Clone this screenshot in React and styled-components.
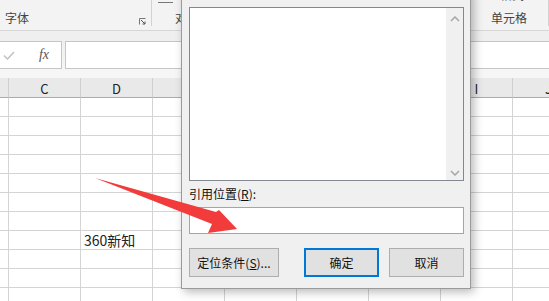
import React from "react";
import styled, { createGlobalStyle } from "styled-components";

const GlobalStyle = createGlobalStyle`
  html, body {
    margin: 0;
    padding: 0;
    background: #ffffff;
    font-family: "Noto Sans CJK SC", "Noto Sans", sans-serif;
  }
`;

const columns = ["B", "C", "D", "E", "F", "G", "H", "I", "J"];
const rowCount = 11;

function App() {
  return (
    <>
      <GlobalStyle />
      <Page>
        <Ribbon>
          <Group $width={151}>
            <GroupLabel>字体</GroupLabel>
            <Launcher>
              <svg width="7" height="7" viewBox="0 0 7 7">
                <path d="M0.5 6.5 V0.5 H6.5" fill="none" stroke="#777" />
                <path d="M2 2 L6 6 M3.5 6 H6 V3.5" fill="none" stroke="#555" />
              </svg>
            </Launcher>
          </Group>
          <Separator />
          <Group $width={40}>
            <TopDash />
            <GroupLabel $pad={23}>对</GroupLabel>
          </Group>
          <Spacer />
          <Group $width={68}>
            <CutRow>
              <svg width="13" height="10" viewBox="0 0 13 10">
                <rect x="0.5" y="0.5" width="12" height="9" fill="none" stroke="#666" />
                <path d="M0.5 5 H12.5 M6.5 0.5 V9.5" stroke="#666" />
              </svg>
              <span>格式</span>
            </CutRow>
            <GroupLabel $pad={11}>单元格</GroupLabel>
          </Group>
          <Separator />
        </Ribbon>

        <FormulaBar>
          <FxBox>
            <svg width="12" height="9" viewBox="0 0 12 9">
              <path d="M1 4.5 L4.5 8 L11 1" fill="none" stroke="#c4c4c4" strokeWidth="1.6" />
            </svg>
            <FxText>fx</FxText>
          </FxBox>
          <FormulaInput />
        </FormulaBar>

        <Sheet>
          {columns.map((c) => (
            <HeaderCell key={c}>{c === "B" ? "" : c}</HeaderCell>
          ))}
          {Array.from({ length: rowCount }).map((_, r) =>
            columns.map((c) => (
              <Cell key={`${r}-${c}`}>{r === 7 && c === "D" ? "360新知" : ""}</Cell>
            ))
          )}
        </Sheet>

        <Dialog>
          <ListBox>
            <ListArea />
            <ScrollBar>
              <svg width="10" height="6" viewBox="0 0 10 6">
                <path d="M1 5 L5 1 L9 5" fill="none" stroke="#a6a6a6" strokeWidth="1.5" />
              </svg>
              <svg width="10" height="6" viewBox="0 0 10 6">
                <path d="M1 1 L5 5 L9 1" fill="none" stroke="#a6a6a6" strokeWidth="1.5" />
              </svg>
            </ScrollBar>
          </ListBox>
          <FieldLabel>
            引用位置(<u>R</u>):
          </FieldLabel>
          <TextInput />
          <ButtonRow>
            <Button $width={90}>
              定位条件(<u>S</u>)...
            </Button>
            <ButtonGroup>
              <Button $width={75} $primary>
                确定
              </Button>
              <Button $width={75}>取消</Button>
            </ButtonGroup>
          </ButtonRow>
        </Dialog>

        <Arrow width="549" height="301" viewBox="0 0 549 301">
          <polygon
            points="95,178 216,212 219,210 237,229 208,233 212,224"
            fill="#f23b3b"
          />
        </Arrow>
      </Page>
    </>
  );
}

const Page = styled.div`
  position: relative;
  width: 549px;
  height: 301px;
  overflow: hidden;
  background: #ffffff;
`;

const Ribbon = styled.div`
  display: flex;
  height: 30px;
  background: #f3f3f3;
  border-bottom: 1px solid #d6d6d6;
`;

const Group = styled.div`
  position: relative;
  width: ${(p) => p.$width}px;
  display: flex;
  flex-direction: column;
  justify-content: flex-end;
  padding-bottom: 4px;
  box-sizing: border-box;
`;

const GroupLabel = styled.div`
  font-size: 12px;
  line-height: 16px;
  color: #444;
  padding-left: ${(p) => p.$pad ?? 5}px;
`;

const Launcher = styled.div`
  position: absolute;
  right: 5px;
  bottom: 5px;
  display: flex;
`;

const Separator = styled.div`
  width: 1px;
  height: 26px;
  background: #d2d2d2;
`;

const TopDash = styled.div`
  position: absolute;
  top: 2px;
  left: 6px;
  width: 15px;
  height: 1px;
  background: #777;
`;

const Spacer = styled.div`
  flex: 1;
`;

const CutRow = styled.div`
  position: absolute;
  top: -13px;
  left: 3px;
  display: flex;
  align-items: center;
  gap: 4px;
  font-size: 12px;
  line-height: 16px;
  color: #444;
`;

const FormulaBar = styled.div`
  display: flex;
  gap: 3px;
  height: 47px;
  padding-top: 10px;
  box-sizing: border-box;
  background: linear-gradient(#efefef 0, #efefef 10px, #f6f6f6 38px);
`;

const FxBox = styled.div`
  width: 62px;
  height: 28px;
  box-sizing: border-box;
  display: flex;
  align-items: center;
  justify-content: space-between;
  padding: 0 12px 0 3px;
  background: #ffffff;
  border: 1px solid #c6c6c6;
  border-left: none;
`;

const FxText = styled.span`
  font-family: "Liberation Serif", serif;
  font-style: italic;
  font-size: 14px;
  color: #555;
`;

const FormulaInput = styled.div`
  flex: 1;
  height: 28px;
  box-sizing: border-box;
  background: #ffffff;
  border: 1px solid #c6c6c6;
  border-right: none;
`;

const Sheet = styled.div`
  display: grid;
  grid-template-columns: 9px repeat(8, 72px);
  grid-auto-rows: 19px;
  grid-template-rows: 20px;
`;

const HeaderCell = styled.div`
  box-sizing: border-box;
  background: #e9e9e9;
  border-right: 1px solid #cfcfcf;
  border-bottom: 1px solid #ababab;
  display: flex;
  align-items: center;
  justify-content: center;
  font-size: 13px;
  color: #222;
  padding-top: 1px;
`;

const Cell = styled.div`
  box-sizing: border-box;
  border-right: 1px solid #d4d4d4;
  border-bottom: 1px solid #d4d4d4;
  font-size: 14px;
  line-height: 18px;
  color: #222;
  padding-left: 3px;
  white-space: nowrap;
`;

const Dialog = styled.div`
  position: absolute;
  left: 181px;
  top: -10px;
  width: 290px;
  box-sizing: border-box;
  padding: 16px 6px 11px 7px;
  background: #f0f0f0;
  border: 1px solid #9a9a9a;
  box-shadow: 3px 3px 9px rgba(0, 0, 0, 0.28);
  display: flex;
  flex-direction: column;
`;

const ListBox = styled.div`
  display: flex;
  height: 174px;
  box-sizing: border-box;
  border: 1px solid #828790;
  background: #ffffff;
`;

const ListArea = styled.div`
  flex: 1;
`;

const ScrollBar = styled.div`
  width: 17px;
  background: #f0f0f0;
  display: flex;
  flex-direction: column;
  align-items: center;
  justify-content: space-between;
  padding: 8px 0 4px;
  box-sizing: border-box;
`;

const FieldLabel = styled.div`
  margin-top: 5px;
  font-size: 12px;
  line-height: 16px;
  color: #111;
  u {
    text-decoration-thickness: 1px;
  }
`;

const TextInput = styled.div`
  margin-top: 5px;
  height: 27px;
  box-sizing: border-box;
  background: #ffffff;
  border: 1px solid #a5a5a5;
`;

const ButtonRow = styled.div`
  margin-top: 14px;
  display: flex;
  justify-content: space-between;
`;

const ButtonGroup = styled.div`
  display: flex;
  gap: 10px;
`;

const Button = styled.div`
  width: ${(p) => p.$width}px;
  height: 29px;
  box-sizing: border-box;
  background: #e1e1e1;
  border: ${(p) => (p.$primary ? "2px solid #0078d7" : "1px solid #adadad")};
  display: flex;
  align-items: center;
  justify-content: center;
  font-size: 12px;
  color: #111;
  u {
    text-decoration-thickness: 1px;
  }
`;

const Arrow = styled.svg`
  position: absolute;
  left: 0;
  top: 0;
  pointer-events: none;
`;

export default App;
